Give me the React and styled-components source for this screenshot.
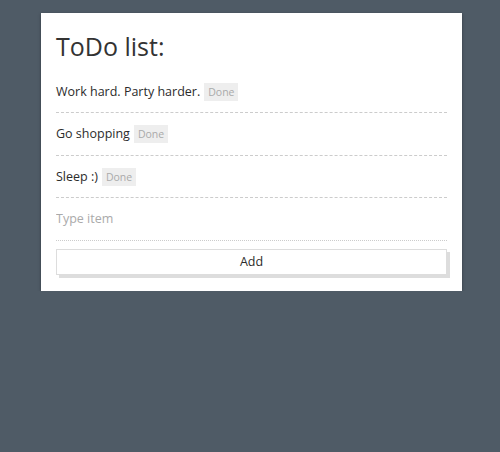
import React from 'react'
import styled, { createGlobalStyle } from 'styled-components'

const Global = createGlobalStyle`
  html, body {
    margin: 0;
    padding: 0;
    background: #4f5b66;
    font-family: 'Open Sans', sans-serif;
  }
`

const Card = styled.main`
  width: 421px;
  box-sizing: border-box;
  margin: 13px 0 0 41px;
  padding: 15px 15px 16px 15px;
  background: #ffffff;
  box-shadow: 0 1px 3px rgba(0, 0, 0, 0.35);
  color: #333333;
`

const Title = styled.h1`
  margin: 0 0 7px 0;
  font-size: 25px;
  line-height: 36px;
  font-weight: 400;
  color: #333333;
`

const List = styled.ul`
  list-style: none;
  margin: 0;
  padding: 0;
`

const Item = styled.li`
  display: flex;
  align-items: center;
  gap: 4px;
  padding: 11px 0;
  line-height: 19.4px;
  font-size: 12.5px;
  color: #2b2b2b;
  border-bottom: 1px dashed #cccccc;
`

const DoneButton = styled.span`
  background: #eeeeee;
  color: #aaaaaa;
  font-size: 10.5px;
  line-height: 18px;
  padding: 0 4px;
`

const Input = styled.input`
  display: block;
  width: 100%;
  box-sizing: border-box;
  border: none;
  border-bottom: 1px dotted #cccccc;
  outline: none;
  padding: 11px 0;
  line-height: 20px;
  height: 42.4px;
  font-family: 'Open Sans', sans-serif;
  font-size: 12.5px;
  color: #333333;

  &::placeholder {
    color: #aaaaaa;
  }
`

const AddButton = styled.button`
  display: block;
  width: 100%;
  margin-top: 8px;
  height: 26px;
  border: 1px solid #dddddd;
  background: #ffffff;
  box-shadow: 3px 3px 0 #dddddd;
  font-family: 'Open Sans', sans-serif;
  font-size: 12.5px;
  color: #2b2b2b;
  padding: 0;
`

const items = ['Work hard. Party harder.', 'Go shopping', 'Sleep :)']

const App = () => {
  return (
    <>
      <Global />
      <Card>
        <Title>ToDo list:</Title>
        <List>
          {items.map((text) => (
            <Item key={text}>
              {text}
              <DoneButton>Done</DoneButton>
            </Item>
          ))}
        </List>
        <Input placeholder="Type item" />
        <AddButton>Add</AddButton>
      </Card>
    </>
  )
}

export default App
